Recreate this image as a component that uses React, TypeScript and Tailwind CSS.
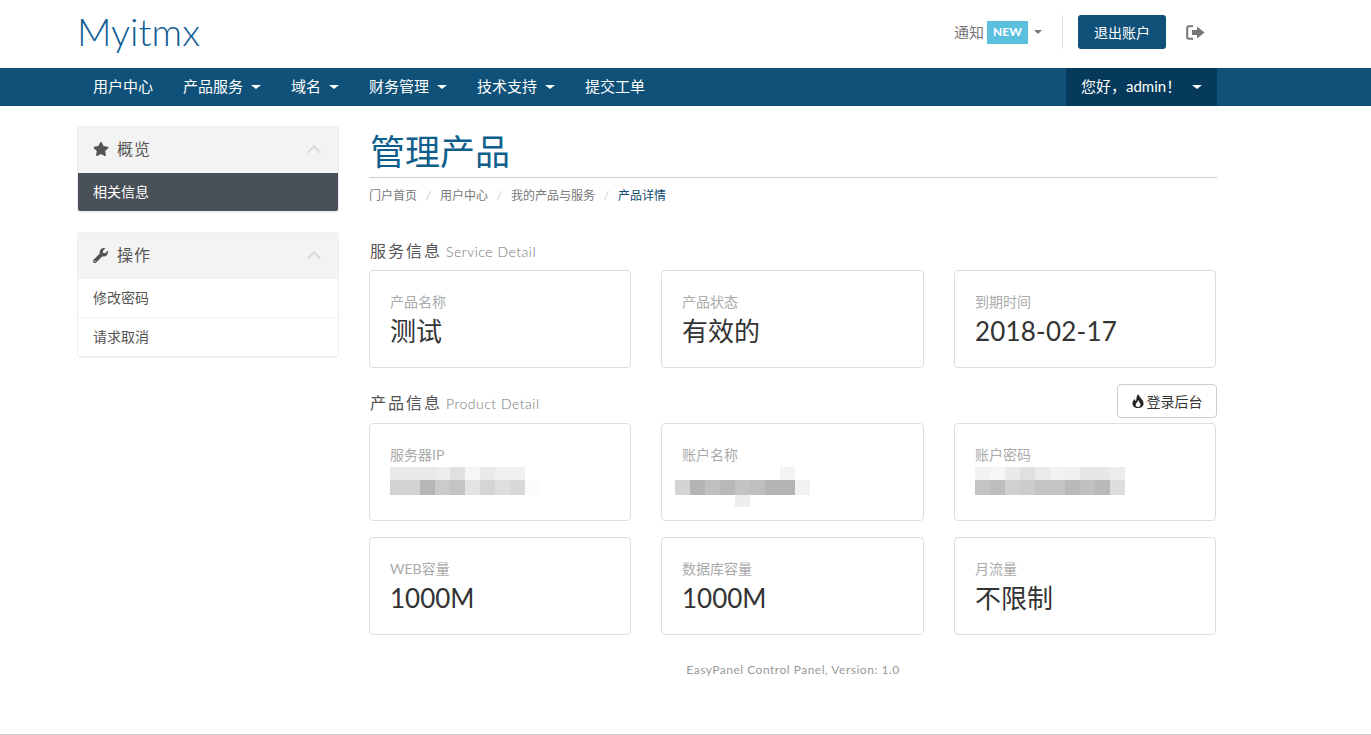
import type { ReactNode } from "react";
import { FaChevronUp, FaStar, FaWrench } from "react-icons/fa";

const cjk = "font-['Lato','Noto_Sans_CJK_SC',sans-serif]";

function Caret({ className }: { className: string }) {
  return <span className={`inline-block h-0 w-0 border-t-[4px] border-x-transparent ${className}`} />;
}

function SignOutIcon() {
  return (
    <svg viewBox="0 0 19 15" className="ml-[20px] h-[15px] w-[19px] text-[#777]">
      <path d="M7 1.2H3Q1.2 1.2 1.2 3V12Q1.2 13.8 3 13.8H7" fill="none" stroke="currentColor" strokeWidth="2" />
      <path d="M6 5H11V1.5L18.5 7.5L11 13.5V10H6Z" fill="currentColor" />
    </svg>
  );
}

function FireIcon() {
  return (
    <svg viewBox="0 0 12 14" className="h-[14px] w-[12px]">
      <path
        d="M6 0C7 3 11 5 11.5 9C12 12 9 14 6 14C3 14 0 12 .5 9C.8 7 2 5.5 3 5C3 6.5 3.5 7 4 7C4.5 4.5 4.5 2 6 0Z"
        fill="#222"
      />
      <path d="M6.3 6C6.5 8 8.8 9 8.5 11C8.3 12.5 7 13 6 13C4.5 13 3.5 12 3.6 10.8C3.7 9.5 5.5 8.5 6.3 6Z" fill="#fff" />
    </svg>
  );
}

const navItems = [
  { label: "用户中心" },
  { label: "产品服务", caret: true },
  { label: "域名", caret: true },
  { label: "财务管理", caret: true },
  { label: "技术支持", caret: true },
  { label: "提交工单" },
];

function SideHead({ icon, title }: { icon: ReactNode; title: string }) {
  return (
    <div className="flex h-[46px] items-center bg-[#f3f3f3] pb-[2px] pl-[15px] pr-[16px] text-[16px] tracking-[1px] text-[#555]">
      <span className="flex w-[24px] text-[#555]">{icon}</span>
      <span>{title}</span>
      <FaChevronUp className="ml-auto text-[16px] text-[#ddd]" />
    </div>
  );
}

// mosaic blocks standing in for the blurred-out values
function Mosaic({ rows }: { rows: string[][] }) {
  const heights = ["h-[13px]", "h-[15px]", "h-[12px]"];
  return (
    <div className="mt-[3px] flex flex-col">
      {rows.map((row, i) => (
        <div key={i} className={`flex ${heights[i]}`}>
          {row.map((c, j) => (
            <span key={j} className="h-full w-[15px]" style={{ backgroundColor: c }} />
          ))}
        </div>
      ))}
    </div>
  );
}

function Card({ label, value, children }: { label: string; value?: ReactNode; children?: ReactNode }) {
  return (
    <div className="h-[98px] rounded-[4px] border border-[#ddd] bg-white px-[20px] pt-[22px]">
      <div className="text-[14px] leading-[18px] text-[#aaa]">{label}</div>
      {value && <div className="mt-[2px] text-[26px] leading-[36px] text-[#333]">{value}</div>}
      {children}
    </div>
  );
}

function SectionTitle({ cn, en }: { cn: string; en: string }) {
  return (
    <div className="flex items-baseline pl-px text-[16px] tracking-[2px] text-[#555]">
      {cn}
      <span className="ml-[4px] text-[14px] font-light tracking-[0.5px] text-[#777]">{en}</span>
    </div>
  );
}

const gridCols = "grid w-[847px] grid-cols-[262px_263px_262px] gap-x-[30px]";

export default function App() {
  return (
    <div className={`flex h-[735px] flex-col overflow-hidden bg-white ${cjk}`}>
      <header className="flex h-[68px] items-center pl-[77px] pr-[154px]">
        <div className="pb-[6px] text-[38px] font-light text-[#0f5c94]">Myitmx</div>
        <div className="ml-auto flex items-center pb-[4px]">
          <span className="text-[15px] text-[#777]">通知</span>
          <span className="ml-[3px] flex h-[23px] w-[41px] items-center justify-center bg-[#5bc0de] text-[12px] font-bold text-white">NEW</span>
          <Caret className="ml-[6px] border-x-[4px] border-t-[#777]" />
          <div className="ml-[20px] h-[34px] w-px bg-[#ddd]" />
          <button className="ml-[15px] h-[34px] w-[88px] rounded-[3px] bg-[#0f5178] text-[14px] text-white">退出账户</button>
          <SignOutIcon />
          <span className="w-[12px]" />
        </div>
      </header>

      <nav className="flex h-[38px] items-center bg-[#0f5178] pl-[78px] pr-[154px] text-[15px] text-white">
        {navItems.map((item) => (
          <a key={item.label} className="flex h-full items-center px-[15px] pb-px">
            {item.label}
            {item.caret && <Caret className="ml-[8px] border-x-[5px] border-t-white" />}
          </a>
        ))}
        <a className="ml-auto flex h-full w-[151px] items-center bg-[#063a5c] px-[15px] pb-px">
          您好，admin！
          <Caret className="ml-auto border-x-[5px] border-t-white" />
        </a>
      </nav>

      <div className="flex gap-[30px] pl-[77px] pr-[154px] pt-[20px]">
        <aside className="flex w-[262px] flex-col gap-[20px]">
          <div className="overflow-hidden rounded-[3px] border border-[#eee] shadow-[0_1px_1px_rgba(0,0,0,0.05)]">
            <SideHead icon={<FaStar className="text-[16px]" />} title="概览" />
            <div className="flex h-[38px] items-center bg-[#4a5057] pb-[2px] pl-[15px] text-[14px] text-white">相关信息</div>
          </div>
          <div className="overflow-hidden rounded-[3px] border border-[#eee] shadow-[0_1px_1px_rgba(0,0,0,0.05)]">
            <SideHead icon={<FaWrench className="text-[15px]" />} title="操作" />
            <div className="flex h-[39px] items-center border-b border-[#f0f0f0] pb-px pl-[15px] text-[14px] text-[#555]">修改密码</div>
            <div className="flex h-[38px] items-center pb-px pl-[15px] text-[14px] text-[#555]">请求取消</div>
          </div>
        </aside>

        <main className="w-[848px]">
          <h1 className="h-[52px] border-b border-[#ccc] pl-px text-[35px] leading-[50px] text-[#0f5f8c]">管理产品</h1>
          <div className="mt-[9px] flex h-[18px] items-center text-[12px] text-[#777]">
            <span>门户首页</span>
            <span className="w-[23px] text-center text-[#ccc]">/</span>
            <span>用户中心</span>
            <span className="w-[23px] text-center text-[#ccc]">/</span>
            <span>我的产品与服务</span>
            <span className="w-[23px] text-center text-[#ccc]">/</span>
            <span className="text-[#0f4a6e]">产品详情</span>
          </div>

          <div className="mt-[34px] h-[31px]">
            <SectionTitle cn="服务信息" en="Service Detail" />
          </div>
          <div className={gridCols}>
            <Card label="产品名称" value="测试" />
            <Card label="产品状态" value="有效的" />
            <Card label="到期时间" value={<span className="tracking-[0.2px]">2018-02-17</span>} />
          </div>

          <div className="mt-[16px] flex h-[39px] items-start justify-between">
            <div className="pt-[7px]">
              <SectionTitle cn="产品信息" en="Product Detail" />
            </div>
            <button className="flex h-[34px] w-[100px] items-center justify-center gap-[3px] rounded-[4px] border border-[#ccc] text-[14px] text-[#333]">
              <FireIcon />
              登录后台
            </button>
          </div>
          <div className={`${gridCols} gap-y-[16px]`}>
            <Card label="服务器IP">
              <Mosaic
                rows={[
                  ["#e8e9e9", "#e8e9e9", "#e8e9e9", "#ecedec", "#dfe0e0", "#f6f6f6", "#e8e9e9", "#eff0f0", "#eff0f0"],
                  ["#d1d3d2", "#d1d3d2", "#b5b6b5", "#cbcbcb", "#c3c4c3", "#e2e3e2", "#d4d5d4", "#dededd", "#d8d9d6", "#fbfbfb"],
                ]}
              />
            </Card>
            <Card label="账户名称">
              <div className="-ml-[7px]">
                <Mosaic
                  rows={[
                    ["#fff", "#fff", "#fff", "#fff", "#fff", "#fff", "#fff", "#f3f3f3"],
                    ["#d4d5d3", "#b3b4b3", "#bfc0bf", "#b7b8b7", "#c3c3c3", "#bebfc0", "#b3b4b3", "#b3b4b3", "#f1f2f4"],
                    ["#fff", "#fff", "#fff", "#fff", "#eeeeee"],
                  ]}
                />
              </div>
            </Card>
            <Card label="账户密码">
              <Mosaic
                rows={[
                  ["#f1f2f3", "#f5f6f6", "#e8eaea", "#dfe1e0", "#e9ebea", "#f1f2f3", "#eff0f0", "#e6e7e6", "#e6e7e6", "#ebecec"],
                  ["#c3c4c3", "#bcbdbd", "#cfd1d0", "#cbcdcc", "#c3c4c4", "#c3c4c4", "#b8bab9", "#bfc0c1", "#b8bab9", "#dcdddd"],
                ]}
              />
            </Card>
            <Card label="WEB容量" value="1000M" />
            <Card label="数据库容量" value="1000M" />
            <Card label="月流量" value="不限制" />
          </div>

          <div className="mt-[26px] text-center text-[12px] tracking-[0.5px] text-[#999]">EasyPanel Control Panel, Version: 1.0</div>
        </main>
      </div>

      <div className="mt-auto border-b border-[#ccc]" />
    </div>
  );
}
